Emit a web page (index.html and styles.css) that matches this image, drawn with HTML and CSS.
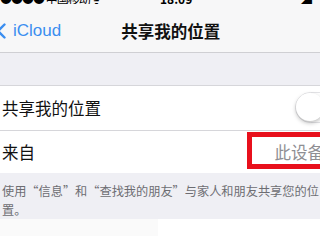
FILE: index.html
```html
<!DOCTYPE html>
<html lang="zh-CN">
<head>
  <meta charset="UTF-8">
  <meta name="viewport" content="width=device-width, initial-scale=1.0">
  <title>共享我的位置</title>
  <link rel="stylesheet" href="styles.css">
</head>
<body>
  <div class="status-bar">
    <span class="carrier">●●●● 中国移动 ᯤ</span>
    <span class="clock">18:09</span>
    <span class="battery">◢</span>
  </div>

  <div class="nav-bar">
    <a class="back" href="#">
      <svg class="chevron" width="10" height="16" viewBox="0 0 10 16">
        <path d="M8.5 1.5 L2 8 L8.5 14.5" fill="none" stroke="#3b8ef0" stroke-width="2.4" stroke-linecap="round" stroke-linejoin="round"/>
      </svg>
      <span>iCloud</span>
    </a>
    <div class="nav-title">共享我的位置</div>
  </div>

  <div class="section-gap"></div>

  <div class="group">
    <div class="row">
      <span class="label">共享我的位置</span>
      <span class="switch"><span class="knob"></span></span>
    </div>
    <div class="row row-from">
      <span class="label">来自</span>
      <span class="value">此设备</span>
      <span class="mark"></span>
    </div>
  </div>

  <div class="footer-note">
    <p>使用“信息”和“查找我的朋友”与家人和朋友共享您的位置。</p>
  </div>

  <div class="bottom">
    <div class="ghost"></div>
  </div>
</body>
</html>
```

FILE: styles.css
```css
/* 基础 */
:root {
  --nav-bg: #f7f7f8;
  --group-bg: #efeff4;
  --line: #d6d6da;
  --blue: #3b8ef0;
  --gray-text: #8e8e93;
  --note-text: #6d6d72;
  --mark: #e8101c;
}

html, body {
  margin: 0;
  padding: 0;
}

body {
  width: 320px;
  height: 240px;
  overflow: hidden;
  background: #fff;
  color: #111;
  font-family: "Noto Sans CJK SC", "Noto Sans", sans-serif;
}

/* 状态栏（只露出底部一点） */
.status-bar {
  height: 4px;
  overflow: hidden;
  background: var(--nav-bg);
  display: flex;
  align-items: flex-end;
  font-size: 12px;
  line-height: 12px;
  color: #000;
}

.status-bar span {
  margin-bottom: -1px;
}

.carrier {
  width: 160px;
  letter-spacing: -1px;
}

.clock {
  width: 140px;
  font-weight: bold;
}

/* 导航栏 */
.nav-bar {
  height: 48px;
  background: var(--nav-bg);
  border-bottom: 1px solid #cfcfd3;
  display: flex;
  align-items: center;
}

.back {
  display: flex;
  align-items: center;
  color: var(--blue);
  text-decoration: none;
  font-family: "Liberation Sans", Arial, sans-serif;
  font-size: 17px;
  margin-left: -4px;
  padding-top: 6px;
}

.chevron {
  margin-right: 7px;
}

.nav-title {
  margin-left: 60px;
  font-size: 16.5px;
  font-weight: 600;
  padding-top: 6px;
}

.section-gap {
  height: 32px;
  background: var(--group-bg);
  border-bottom: 1px solid var(--line);
}

/* 列表 */
.group {
  background: #fff;
}

.row {
  position: relative;
  height: 44px;
  display: flex;
  align-items: center;
  padding-left: 2px;
  border-bottom: 1px solid var(--line);
  font-size: 16.5px;
}

.row-from {
  height: 42px;
  border-bottom: none;
}

.label {
  flex: 1;
}

.switch {
  width: 51px;
  height: 31px;
  box-sizing: border-box;
  border: 1.5px solid #e3e3e6;
  border-radius: 16px;
  margin-right: -26px;
  margin-top: -2px;
  position: relative;
}

.knob {
  position: absolute;
  left: 0;
  top: 0;
  width: 28px;
  height: 28px;
  border-radius: 50%;
  background: #fff;
  box-shadow: 0 2px 4px rgba(0, 0, 0, 0.25);
}

.value {
  color: var(--gray-text);
  margin-right: -4px;
}

/* 红色标注框 */
.mark {
  position: absolute;
  left: 247px;
  top: 1px;
  width: 90px;
  height: 37px;
  border: 5px solid var(--mark);
  box-sizing: border-box;
}

/* 说明文字 */
.footer-note {
  height: 46px;
  background: var(--group-bg);
  box-sizing: border-box;
  padding: 9px 0 0 2px;
}

.footer-note p {
  margin: 0;
  width: 320px;
  font-size: 12.2px;
  line-height: 19px;
  color: var(--note-text);
}

.bottom {
  height: 30px;
  background: #fff;
}

.ghost {
  width: 158px;
  height: 17px;
  background: #fafafa;
}
```
